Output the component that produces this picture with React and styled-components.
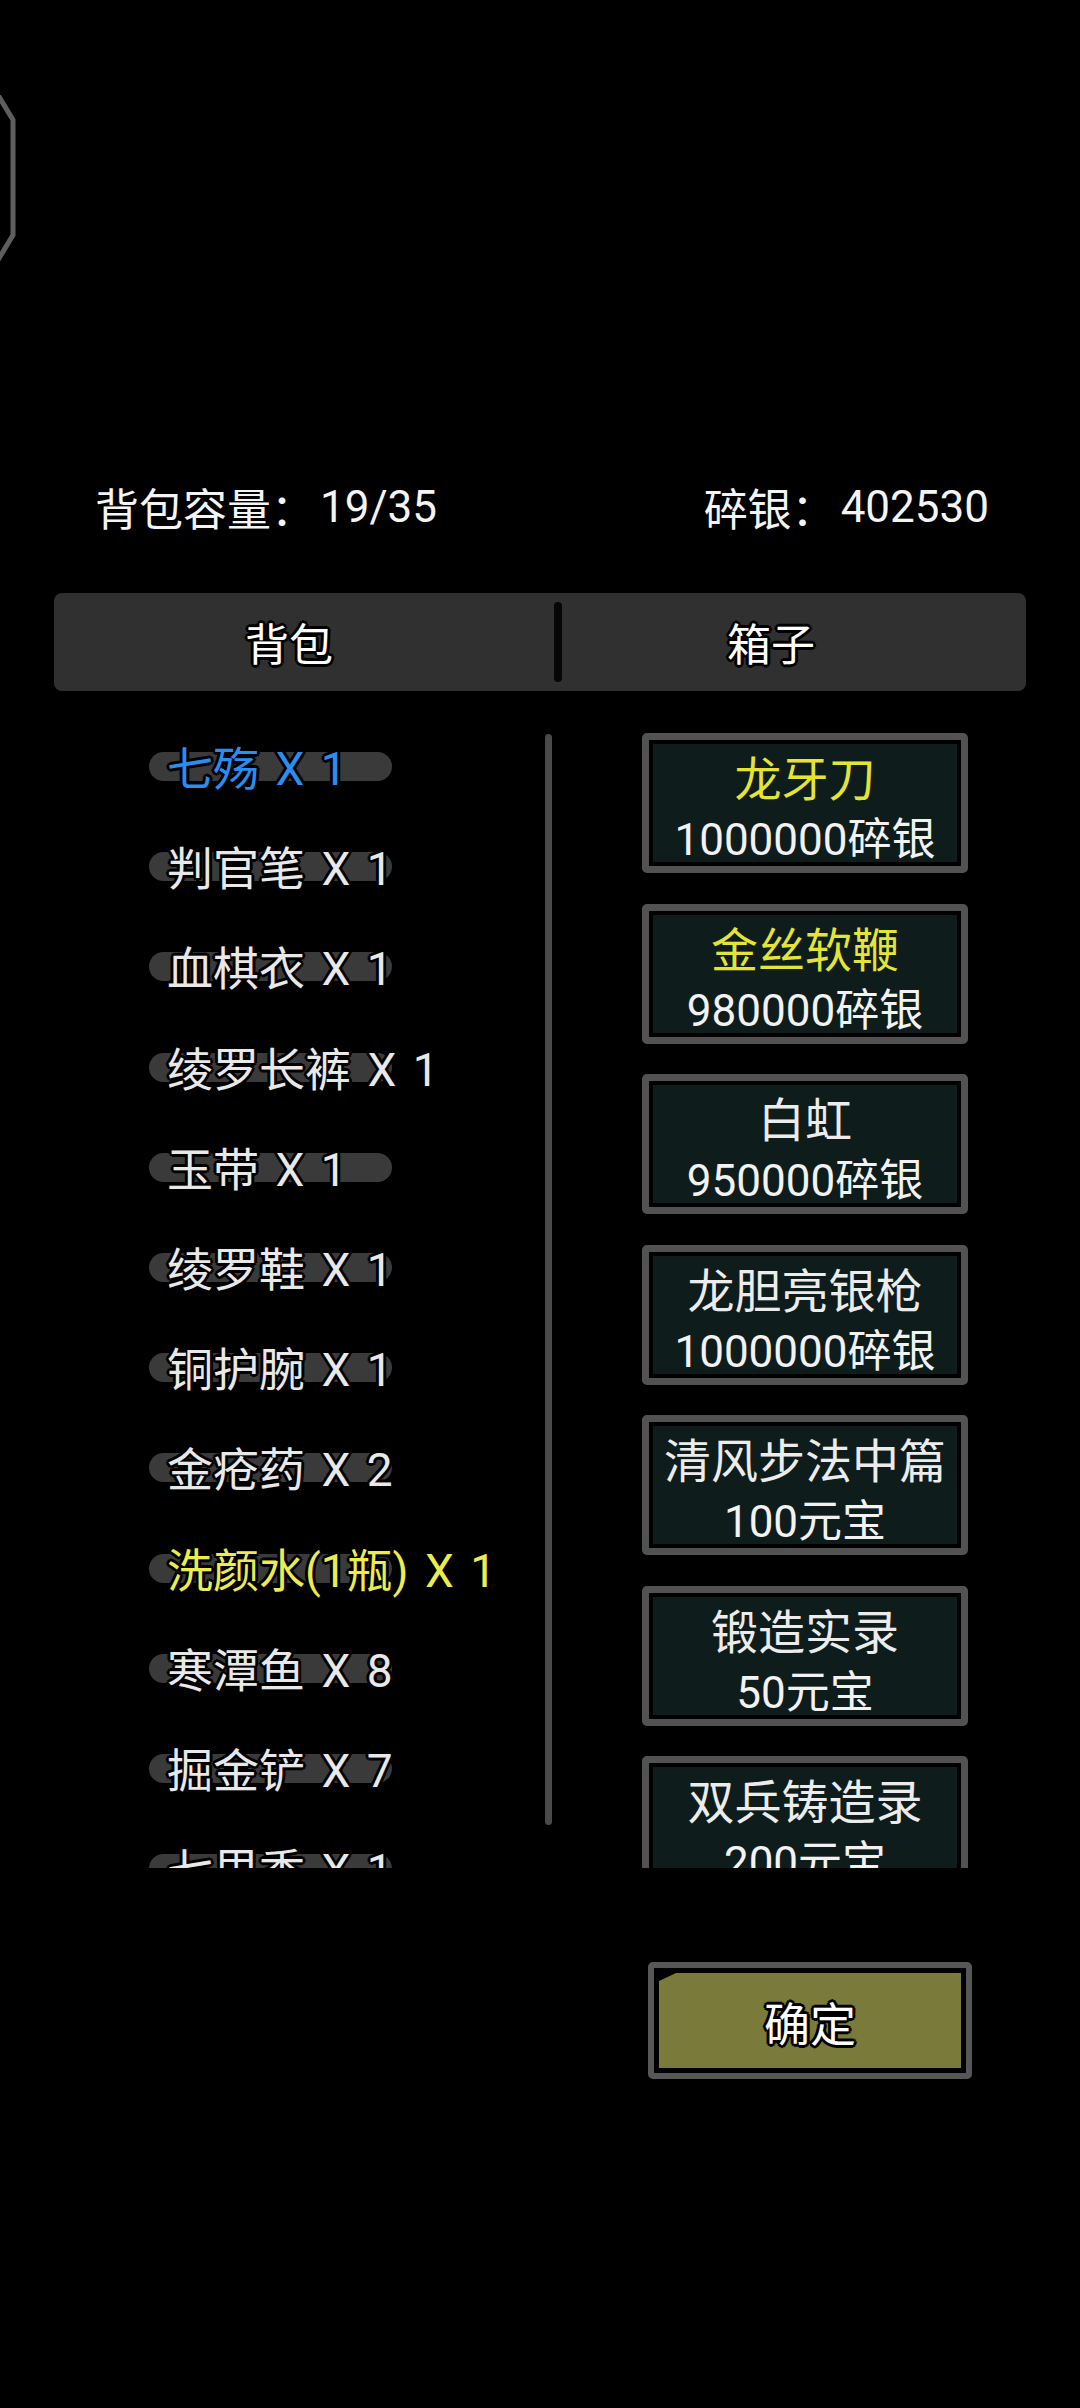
import React from "react";
import styled, { createGlobalStyle } from "styled-components";

const GlobalStyle = createGlobalStyle`
  html, body {
    margin: 0;
    padding: 0;
    background: #000;
  }
  body {
    font-family: Roboto, "Noto Sans CJK SC", sans-serif;
  }
`;

const outline = `
  -3px 0 0 #000, 3px 0 0 #000, 0 -3px 0 #000, 0 3px 0 #000,
  -2px -2px 0 #000, 2px -2px 0 #000, -2px 2px 0 #000, 2px 2px 0 #000
`;

const Screen = styled.div`
  width: 1080px;
  height: 2408px;
  background: #000;
  color: #fff;
  display: flex;
  flex-direction: column;
  overflow: hidden;
`;

const TopArea = styled.div`
  height: 440px;
  padding-top: 95px;
  box-sizing: border-box;
`;

const InfoRow = styled.div`
  height: 134px;
  display: flex;
  align-items: center;
  justify-content: space-between;
  padding: 0 91px 0 95px;
  font-size: 44px;
  color: #f4f4f4;
`;

const Stat = styled.div`
  display: flex;
  align-items: center;
  white-space: nowrap;
`;

const StatValue = styled.span`
  margin-left: 5px;
`;

const TabBar = styled.div`
  margin: 19px 54px 0;
  height: 98px;
  background: #303030;
  border-radius: 8px;
  display: grid;
  grid-template-columns: 500px 8px 1fr;
  align-items: center;
`;

const Tab = styled.div`
  padding-right: ${p => p.$shift}px;
  text-align: center;
  font-size: 44px;
  color: #fff;
  text-shadow: ${outline};
`;

const TabDivider = styled.div`
  height: 80px;
  background: #060606;
  border-radius: 4px;
`;

const Content = styled.div`
  height: 1177px;
  display: flex;
  overflow: hidden;
  padding-left: 149px;
`;

const ItemList = styled.div`
  width: 396px;
  flex-shrink: 0;
  padding-top: 24px;
  display: flex;
  flex-direction: column;
`;

const ItemRow = styled.div`
  position: relative;
  isolation: isolate;
  height: 100.2px;
  flex-shrink: 0;
  display: flex;
  align-items: center;
  padding-left: 18px;
  font-size: 46px;
  word-spacing: 5px;
  white-space: nowrap;
  color: ${p => p.color || "#e8e8e8"};
  text-shadow: ${outline};

  &::before {
    content: "";
    position: absolute;
    z-index: -1;
    left: 0;
    top: 50%;
    width: 243px;
    height: 29px;
    margin-top: -13px;
    border-radius: 15px;
    background: #3a3a3a;
  }
`;

const ScrollTrack = styled.div`
  width: 7px;
  height: 1091px;
  margin-top: 43px;
  flex-shrink: 0;
  border-radius: 4px;
  background: #4a4a4a;
`;

const ShopColumn = styled.div`
  width: 326px;
  margin-left: 90px;
  padding-top: 42px;
  flex-shrink: 0;
  display: flex;
  flex-direction: column;
  gap: 30.5px;
`;

const Card = styled.div`
  height: 140px;
  flex-shrink: 0;
  box-sizing: border-box;
  border: 7px solid #525252;
  border-radius: 5px;
  padding: 4px;
  background: #000;
`;

const CardFace = styled.div`
  height: 100%;
  box-sizing: border-box;
  padding-top: 14px;
  background: #0f1c1c;
  display: flex;
  flex-direction: column;
  align-items: center;
  justify-content: center;
  line-height: 60px;
  white-space: nowrap;
`;

const CardTitle = styled.div`
  font-size: 47px;
  color: ${p => (p.$rare ? "#e4e434" : "#ececec")};
`;

const CardPrice = styled.div`
  font-size: 44px;
  color: #f2f2f2;
`;

const Footer = styled.div`
  padding: 94px 0 0 648px;
`;

const ConfirmButton = styled.button`
  display: block;
  width: 324px;
  height: 117px;
  box-sizing: border-box;
  border: 6px solid #575757;
  border-radius: 5px;
  padding: 5px;
  background: #000;
  cursor: pointer;
`;

const ConfirmFace = styled.div`
  height: 100%;
  background: #7a7a3a;
  clip-path: polygon(0 8px, 17px 0, 100% 0, 100% 100%, 0 100%);
  display: flex;
  align-items: center;
  justify-content: center;
  font-family: Roboto, "Noto Sans CJK SC", sans-serif;
  font-size: 46px;
  color: #fff;
  text-shadow: ${outline};
`;

const CornerFrame = () => (
  <svg width="20" height="170" viewBox="0 0 20 170">
    <polyline
      points="-2,0 13,25 13,140 -2,165"
      fill="none"
      stroke="#5e5e5e"
      strokeWidth="5"
    />
  </svg>
);

const items = [
  { name: "七殇 X 1", color: "#2a8ef0" },
  { name: "判官笔 X 1" },
  { name: "血棋衣 X 1" },
  { name: "绫罗长裤 X 1" },
  { name: "玉带 X 1" },
  { name: "绫罗鞋 X 1" },
  { name: "铜护腕 X 1" },
  { name: "金疮药 X 2" },
  { name: "洗颜水(1瓶) X 1", color: "#ecec4e" },
  { name: "寒潭鱼 X 8" },
  { name: "掘金铲 X 7" },
  { name: "七里香 X 1" },
];

const goods = [
  { title: "龙牙刀", price: "1000000碎银", rare: true },
  { title: "金丝软鞭", price: "980000碎银", rare: true },
  { title: "白虹", price: "950000碎银" },
  { title: "龙胆亮银枪", price: "1000000碎银" },
  { title: "清风步法中篇", price: "100元宝" },
  { title: "锻造实录", price: "50元宝" },
  { title: "双兵铸造录", price: "200元宝" },
];

export default function App() {
  return (
    <Screen>
      <GlobalStyle />
      <TopArea>
        <CornerFrame />
      </TopArea>
      <InfoRow>
        <Stat>
          背包容量：<StatValue>19/35</StatValue>
        </Stat>
        <Stat>
          碎银：<StatValue>402530</StatValue>
        </Stat>
      </InfoRow>
      <TabBar>
        <Tab $shift={30}>背包</Tab>
        <TabDivider />
        <Tab $shift={46}>箱子</Tab>
      </TabBar>
      <Content>
        <ItemList>
          {items.map(it => (
            <ItemRow key={it.name} color={it.color}>
              {it.name}
            </ItemRow>
          ))}
        </ItemList>
        <ScrollTrack />
        <ShopColumn>
          {goods.map(g => (
            <Card key={g.title}>
              <CardFace>
                <CardTitle $rare={g.rare}>{g.title}</CardTitle>
                <CardPrice>{g.price}</CardPrice>
              </CardFace>
            </Card>
          ))}
        </ShopColumn>
      </Content>
      <Footer>
        <ConfirmButton>
          <ConfirmFace>确定</ConfirmFace>
        </ConfirmButton>
      </Footer>
    </Screen>
  );
}
